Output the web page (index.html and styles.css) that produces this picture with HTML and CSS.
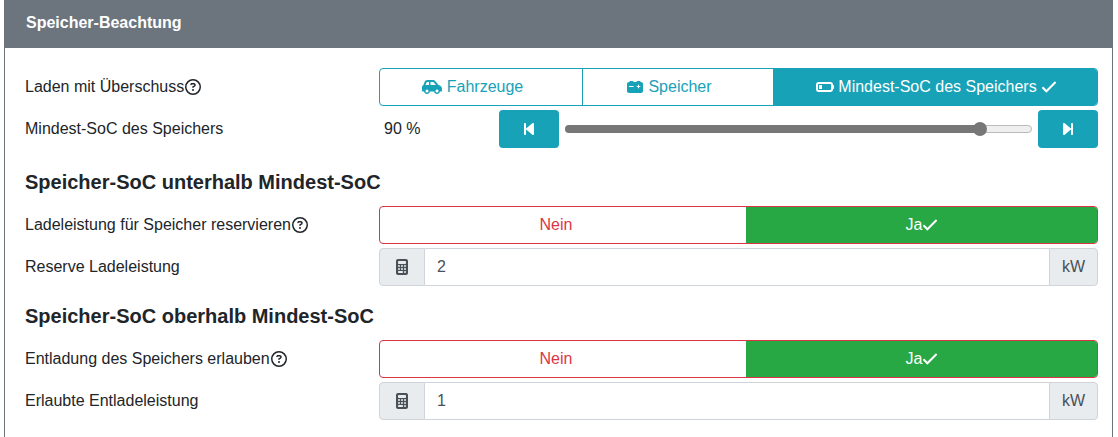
FILE: index.html
```html
<!DOCTYPE html>
<html lang="de">
<head>
<meta charset="utf-8">
<title>Speicher-Beachtung</title>
<link rel="stylesheet" href="styles.css">
</head>
<body>
<svg class="defs" width="0" height="0" aria-hidden="true">
  <symbol id="i-car" viewBox="0 0 640 512"><path d="M171.300 96H224v96H111.300l30.400-75.900C146.500 104 158.200 96 171.300 96zM272 192V96h81.200c9.700 0 18.900 4.400 25 12l67.200 84H272zm256.200 1L428.200 68c-18.200-22.800-45.800-36-75-36H171.300c-39.300 0-74.600 23.900-89.100 60.300L40.600 196.400C16.800 205.800 0 228.900 0 256V368c0 17.700 14.300 32 32 32H65.300c7.600 45.400 47.100 80 94.700 80s87.100-34.600 94.700-80H385.300c7.600 45.400 47.100 80 94.700 80s87.100-34.600 94.700-80H608c17.700 0 32-14.300 32-32V320c0-65.200-48.800-119-111.800-127zM434.700 368a48 48 0 1 1 90.500 32 48 48 0 1 1 -90.500-32zM160 336a48 48 0 1 1 0 96 48 48 0 1 1 0-96z"/></symbol>
  <symbol id="i-cbat" viewBox="0 0 512 512"><path d="M80 96c0-17.700 14.300-32 32-32h64c17.700 0 32 14.300 32 32l96 0c0-17.700 14.300-32 32-32h64c17.700 0 32 14.300 32 32h16c35.300 0 64 28.700 64 64V384c0 35.300-28.700 64-64 64H64c-35.300 0-64-28.700-64-64V160c0-35.300 28.700-64 64-64l16 0zm304 96c0-8.800-7.200-16-16-16s-16 7.200-16 16v32H320c-8.800 0-16 7.200-16 16s7.200 16 16 16h32v32c0 8.800 7.200 16 16 16s16-7.200 16-16V256h32c8.800 0 16-7.200 16-16s-7.200-16-16-16H384V192zM72 224c-8.800 0-16 7.200-16 16s7.200 16 16 16H200c8.800 0 16-7.200 16-16s-7.200-16-16-16H72z"/></symbol>
  <symbol id="i-bat" viewBox="0 0 576 512"><path d="M464 160c8.800 0 16 7.200 16 16V336c0 8.800-7.200 16-16 16H80c-8.800 0-16-7.200-16-16V176c0-8.800 7.200-16 16-16H464zM80 96C35.800 96 0 131.800 0 176V336c0 44.200 35.800 80 80 80H464c44.200 0 80-35.800 80-80V320c17.700 0 32-14.300 32-32V224c0-17.700-14.300-32-32-32V176c0-44.200-35.800-80-80-80H80zm112 96H96V320h96V192z"/></symbol>
  <symbol id="i-check" viewBox="0 0 512 512"><path d="M435.848 83.466L172.804 346.510l-96.652-96.652c-4.686-4.686-12.284-4.686-16.971 0l-28.284 28.284c-4.686 4.686-4.686 12.284 0 16.971l133.421 133.421c4.686 4.686 12.284 4.686 16.971 0l299.813-299.813c4.686-4.686 4.686-12.284 0-16.970l-28.284-28.284c-4.686-4.686-12.284-4.686-16.970 0z"/></symbol>
  <symbol id="i-back" viewBox="0 0 320 512"><path d="M267.500 440.600c9.500 7.900 22.800 9.700 34.100 4.400s18.400-16.600 18.400-29V96c0-12.400-7.200-23.700-18.400-29s-24.500-3.600-34.100 4.400l-192 160L64 241V96c0-17.700-14.300-32-32-32S0 78.300 0 96V416c0 17.700 14.300 32 32 32s32-14.300 32-32V271l11.500 9.600 192 160z"/></symbol>
  <symbol id="i-fwd" viewBox="0 0 320 512"><path d="M52.500 440.600c-9.500 7.900-22.800 9.700-34.100 4.400S0 428.400 0 416V96C0 83.600 7.200 72.300 18.400 67s24.500-3.600 34.100 4.400l192 160L256 241V96c0-17.700 14.300-32 32-32s32 14.300 32 32V416c0 17.700-14.300 32-32 32s-32-14.300-32-32V271l-11.500 9.600-192 160z"/></symbol>
  <symbol id="i-calc" viewBox="0 0 384 512"><path d="M64 0C28.700 0 0 28.700 0 64V448c0 35.300 28.700 64 64 64H320c35.300 0 64-28.700 64-64V64c0-35.300-28.700-64-64-64H64zM96 64H288c17.700 0 32 14.300 32 32v32c0 17.700-14.300 32-32 32H96c-17.700 0-32-14.300-32-32V96c0-17.700 14.300-32 32-32zm32 160a32 32 0 1 1 -64 0 32 32 0 1 1 64 0zM96 352a32 32 0 1 1 0-64 32 32 0 1 1 0 64zM64 416c0-17.700 14.300-32 32-32h96c17.700 0 32 14.300 32 32s-14.300 32-32 32H96c-17.700 0-32-14.300-32-32zM192 256a32 32 0 1 1 0-64 32 32 0 1 1 0 64zm32 64a32 32 0 1 1 -64 0 32 32 0 1 1 64 0zm64-64a32 32 0 1 1 0-64 32 32 0 1 1 0 64zm32 64a32 32 0 1 1 -64 0 32 32 0 1 1 64 0zM288 448a32 32 0 1 1 0-64 32 32 0 1 1 0 64z"/></symbol>
  <symbol id="i-help" viewBox="0 0 512 512"><path d="M464 256A208 208 0 1 0 48 256a208 208 0 1 0 416 0zM0 256a256 256 0 1 1 512 0A256 256 0 1 1 0 256zm169.800-90.700c7.900-22.300 29.100-37.300 52.800-37.300h58.300c34.900 0 63.100 28.300 63.100 63.100c0 22.600-12.100 43.500-31.700 54.800L280 264.400c-.2 13-10.900 23.600-24 23.600c-13.300 0-24-10.700-24-24V250.500c0-8.600 4.600-16.500 12.100-20.800l44.300-25.400c4.700-2.700 7.600-7.700 7.600-13.100c0-8.400-6.800-15.100-15.100-15.100H222.600c-3.400 0-6.400 2.100-7.500 5.300l-.4 1.200c-4.400 12.500-18.200 19-30.600 14.600s-19-18.200-14.600-30.600l.4-1.200zM224 352a32 32 0 1 1 64 0 32 32 0 1 1 -64 0z"/></symbol>
</svg>
<section class="card">
  <header class="card-header">Speicher-Beachtung</header>
  <div class="card-body">
    <div class="row">
      <div class="label">Laden mit Überschuss<svg class="help"><use href="#i-help"/></svg></div>
      <div class="toggle info">
        <div class="opt w-car"><svg class="ic w20"><use href="#i-car"/></svg> Fahrzeuge <svg class="ic w16 ghost"><use href="#i-check"/></svg></div>
        <div class="opt w-spe"><svg class="ic w16 wide-gap"><use href="#i-cbat"/></svg> Speicher <svg class="ic w16 ghost"><use href="#i-check"/></svg></div>
        <div class="opt on grow"><svg class="ic w18"><use href="#i-bat"/></svg> Mindest-SoC des Speichers <svg class="ic w16"><use href="#i-check"/></svg></div>
      </div>
    </div>
    <div class="row">
      <div class="label">Mindest-SoC des Speichers</div>
      <div class="slider-row">
        <div class="value">90 %</div>
        <button class="step"><svg class="ic w10"><use href="#i-back"/></svg></button>
        <div class="track"><div class="fill" style="width:89%"></div><div class="thumb"></div></div>
        <button class="step"><svg class="ic w10"><use href="#i-fwd"/></svg></button>
      </div>
    </div>
    <h3 class="heading">Speicher-SoC unterhalb Mindest-SoC</h3>
    <div class="row">
      <div class="label">Ladeleistung für Speicher reservieren<svg class="help"><use href="#i-help"/></svg></div>
      <div class="toggle danger">
        <div class="opt no">Nein<svg class="ic w16 ghost"><use href="#i-check"/></svg></div>
        <div class="opt yes">Ja<svg class="ic w16"><use href="#i-check"/></svg></div>
      </div>
    </div>
    <div class="row">
      <div class="label">Reserve Ladeleistung</div>
      <div class="input-group">
        <div class="addon left"><svg class="ic w12 dark"><use href="#i-calc"/></svg></div>
        <div class="field">2</div>
        <div class="addon right">kW</div>
      </div>
    </div>
    <h3 class="heading second">Speicher-SoC oberhalb Mindest-SoC</h3>
    <div class="row">
      <div class="label">Entladung des Speichers erlauben<svg class="help"><use href="#i-help"/></svg></div>
      <div class="toggle danger">
        <div class="opt no">Nein<svg class="ic w16 ghost"><use href="#i-check"/></svg></div>
        <div class="opt yes">Ja<svg class="ic w16"><use href="#i-check"/></svg></div>
      </div>
    </div>
    <div class="row">
      <div class="label">Erlaubte Entladeleistung</div>
      <div class="input-group">
        <div class="addon left"><svg class="ic w12 dark"><use href="#i-calc"/></svg></div>
        <div class="field">1</div>
        <div class="addon right">kW</div>
      </div>
    </div>
  </div>
</section>
</body>
</html>
```
FILE: styles.css
```css
* { box-sizing: border-box; }
html, body { height: 100%; }
body {
  margin: 0;
  padding: 0 5px 0 4px;
  overflow: hidden;
  background: #fff;
  color: #212529;
  font-family: "Liberation Sans", Arial, sans-serif;
  font-size: 16px;
  line-height: 24px;
}
.defs { position: absolute; }
.card {
  height: 100%;
  border: 1px solid #6c757d;
  border-top: 0;
  border-bottom: 0;
}
.card-header {
  height: 48px;
  margin: 0 -1px;
  padding: 11px 22px 0;
  background: #6c757d;
  color: #fff;
  font-weight: 700;
}
.card-body { padding: 20px 14px 0 20px; }
.row {
  display: grid;
  grid-template-columns: 354px 1fr;
  align-items: center;
  height: 38px;
  margin-bottom: 4px;
}
.label { display: flex; align-items: center; }
.help { width: 16px; height: 16px; margin-left: 1px; fill: #212529; }
.ic { height: 16px; fill: currentColor; }
.w20 { width: 20px; }
.w18 { width: 18px; }
.w16 { width: 16px; }
.w12 { width: 12px; }
.w10 { width: 10px; }
.ghost { visibility: hidden; }
.wide-gap { margin-right: 1px; }
.dark { fill: #495057; }
.toggle { display: flex; height: 38px; border-radius: 4px; overflow: hidden; border: 1px solid; }
.toggle.info { border-color: #17a2b8; color: #17a2b8; }
.toggle.danger { border-color: #dc3545; color: #dc3545; }
.opt { display: flex; align-items: center; justify-content: center; white-space: pre; padding-left: 2px; }
.w-car { width: 203px; padding-left: 4px; border-right: 1px solid #17a2b8; }
.w-spe { width: 190px; padding-left: 3px; }
.grow { flex: 1; }
.on { background: #17a2b8; color: #fff; margin: -1px -1px -1px 0; }
.no { width: 366px; }
.yes { flex: 1; padding-left: 0; background: #28a745; color: #fff; margin: -1px -1px -1px 0; }
.slider-row { display: flex; align-items: center; height: 38px; }
.value { width: 120px; padding-left: 5px; }
.step {
  display: flex;
  align-items: center;
  justify-content: center;
  width: 60px;
  height: 38px;
  padding: 0;
  border: 0;
  border-radius: 4px;
  background: #17a2b8;
  color: #fff;
}
.track {
  position: relative;
  flex: 1;
  height: 8px;
  margin: 0 6px;
  border: 1px solid #bbb;
  border-radius: 4px;
  background: #efefef;
}
.fill { height: 8px; margin: -1px; background: #777; border-radius: 4px 0 0 4px; }
.thumb {
  position: absolute;
  left: 407px;
  top: -4px;
  width: 14px;
  height: 14px;
  border-radius: 50%;
  background: #777;
}
.heading {
  height: 24px;
  margin: 22px 0 12px;
  font-size: 20px;
  line-height: 24px;
  font-weight: 700;
}
.heading.second { margin-top: 18px; }
.input-group { display: flex; height: 38px; }
.addon {
  display: flex;
  align-items: center;
  justify-content: center;
  background: #e9ecef;
  border: 1px solid #ced4da;
  color: #495057;
}
.addon.left { width: 46px; border-radius: 4px 0 0 4px; }
.addon.right { width: 49px; border-radius: 0 4px 4px 0; }
.field {
  flex: 1;
  display: flex;
  align-items: center;
  padding-left: 12px;
  color: #495057;
  border-top: 1px solid #ced4da;
  border-bottom: 1px solid #ced4da;
}
```
